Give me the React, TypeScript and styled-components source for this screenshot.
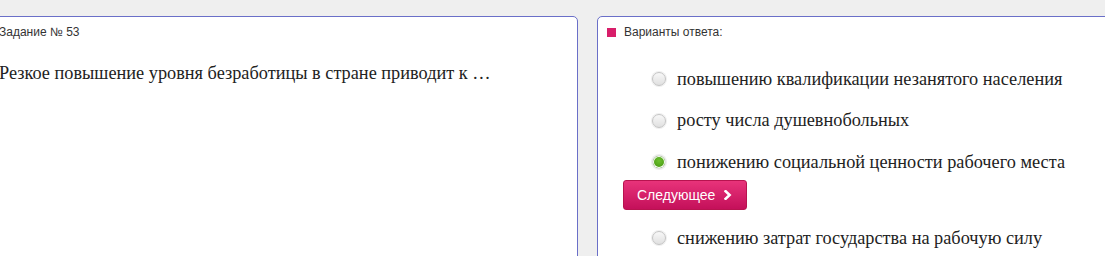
import React from "react";
import styled, { createGlobalStyle } from "styled-components";

const Global = createGlobalStyle`
  html, body { margin: 0; padding: 0; }
  body {
    background: #efefef;
    overflow: hidden;
    width: 1105px;
    height: 256px;
  }
`;

const Page = styled.div`
  display: flex;
  align-items: flex-start;
  gap: 19px;
  padding-top: 16px;
  margin-left: -11px;
  width: 1300px;
`;

const Panel = styled.div<{ $width: number }>`
  box-sizing: border-box;
  width: ${(p) => p.$width}px;
  min-height: 320px;
  background: #ffffff;
  border: 1px solid #6a6fc8;
  border-radius: 5px;
  padding: 8px 9px;
`;

const Caption = styled.div`
  display: flex;
  align-items: center;
  gap: 8px;
  font-family: "Liberation Sans", Arial, sans-serif;
  font-size: 12px;
  line-height: 14px;
  color: #333333;
`;

const Marker = styled.span`
  width: 9px;
  height: 9px;
  background: #d81e6a;
  flex: none;
`;

const Question = styled.div`
  margin-top: 24px;
  font-family: "Liberation Serif", "Times New Roman", serif;
  font-size: 18.3px;
  line-height: 20px;
  color: #222222;
`;

const Options = styled.div`
  display: flex;
  flex-direction: column;
  gap: 21.5px;
  margin-top: 30px;
  padding-left: 45px;
`;

const Option = styled.label`
  display: flex;
  align-items: center;
  gap: 11px;
  height: 20px;
  font-family: "Liberation Serif", "Times New Roman", serif;
  font-size: 18.3px;
  color: #222222;
`;

const Radio = styled.span<{ $checked?: boolean }>`
  box-sizing: border-box;
  width: 14px;
  height: 14px;
  border-radius: 50%;
  flex: none;
  border: 1px solid #c4c4c4;
  background: ${(p) =>
    p.$checked
      ? "radial-gradient(circle at 50% 40%, #6cc12e 0%, #4d9d16 70%)"
      : "linear-gradient(#f8f8f8, #e0e0e0)"};
  box-shadow: 0 0 0 1px #efefef;
  ${(p) => (p.$checked ? "border-color: #dcdcdc; box-shadow: inset 0 0 0 1px #ffffff, 0 0 0 1px #eeeeee;" : "")}
`;

const NextButton = styled.button`
  box-sizing: border-box;
  display: flex;
  align-items: center;
  gap: 9px;
  align-self: flex-start;
  height: 30px;
  margin: -13.5px 0 -3.5px -29px;
  padding: 0 14px 0 13px;
  border: 1px solid #b8134f;
  border-radius: 3px;
  background: linear-gradient(#e8337a, #c4105a);
  color: #ffffff;
  font-family: "Liberation Sans", Arial, sans-serif;
  font-size: 14px;
  line-height: 16px;
  cursor: pointer;
`;

const Chevron = () => (
  <svg width="8" height="10" viewBox="0 0 8 10" aria-hidden="true">
    <path d="M1.6 1.2 L5.6 5 L1.6 8.8" fill="none" stroke="#ffffff" strokeWidth="2.6" strokeLinecap="square" />
  </svg>
);

export default function App() {
  return (
    <>
      <Global />
      <Page>
        <Panel $width={589}>
          <Caption>Задание № 53</Caption>
          <Question>Резкое повышение уровня безработицы в стране приводит к …</Question>
        </Panel>
        <Panel $width={600}>
          <Caption>
            <Marker />
            Варианты ответа:
          </Caption>
          <Options>
            <Option>
              <Radio />
              повышению квалификации незанятого населения
            </Option>
            <Option>
              <Radio />
              росту числа душевнобольных
            </Option>
            <Option>
              <Radio $checked />
              понижению социальной ценности рабочего места
            </Option>
            <NextButton>
              Следующее <Chevron />
            </NextButton>
            <Option>
              <Radio />
              снижению затрат государства на рабочую силу
            </Option>
          </Options>
        </Panel>
      </Page>
    </>
  );
}
